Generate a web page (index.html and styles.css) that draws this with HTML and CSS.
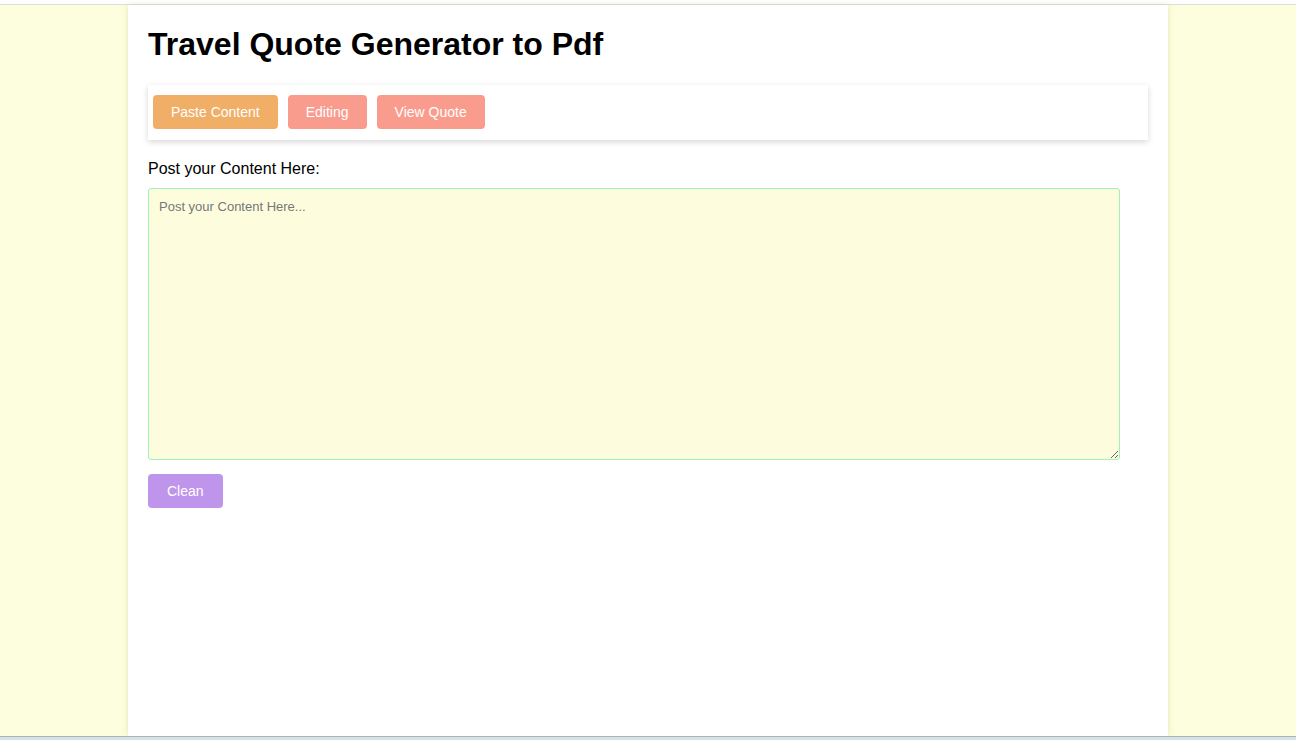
FILE: index.html
```html
<!DOCTYPE html>
<html lang="en">

<head>
  <meta charset="UTF-8" />
  <meta name="viewport" content="width=device-width, initial-scale=1.0" />
  <title>Travel Quote Generator to Pdf</title>
  <link rel="stylesheet" href="styles.css">
</head>

<body>
  <div class="top-strip"></div>

  <div class="page">
    <div class="container">
      <h1>Travel Quote Generator to Pdf</h1>

      <!-- Tabs -->
      <div class="tab-bar">
        <button class="tab tab-active" onclick="showTab('paste')">Paste Content</button>
        <button class="tab" onclick="showTab('edit')">Editing</button>
        <button class="tab" onclick="showTab('view')">View Quote</button>
      </div>

      <!-- Paste Section -->
      <div id="paste-section">
        <label class="field-label" for="content">Post your Content Here:</label>
        <textarea id="content" placeholder="Post your Content Here..."></textarea>
        <button class="clean-btn" onclick="cleanContent()">Clean</button>
      </div>
    </div>
  </div>

  <div class="bottom-strip"></div>

  <script>
    function showTab(name) {
      const tabs = document.querySelectorAll(".tab");
      const names = ["paste", "edit", "view"];
      tabs.forEach(function (tab, i) {
        tab.classList.toggle("tab-active", names[i] === name);
      });
    }

    function cleanContent() {
      document.getElementById("content").value = "";
    }
  </script>
</body>

</html>
```

FILE: styles.css
```css
html,
body {
  height: 100%;
}

body {
  font-family: Arial, "Liberation Sans", sans-serif;
  background-color: #fdfedd;
  margin: 0;
  display: flex;
  flex-direction: column;
}

.top-strip {
  height: 4px;
  background-color: #fff;
  border-bottom: 1px solid #dedede;
}

.page {
  flex: 1;
  display: flex;
  justify-content: center;
  min-height: 0;
}

.container {
  background-color: #fff;
  width: 1040px;
  padding: 0 20px;
  box-sizing: border-box;
  box-shadow: 0 0 6px rgba(180, 180, 120, 0.35);
}

.container h1 {
  font-size: 32px;
  margin: 21px 0 22px;
  color: #000;
}

.tab-bar {
  display: flex;
  gap: 10px;
  padding: 10px 5px 11px;
  box-shadow: 0 2px 6px rgba(0, 0, 0, 0.16);
}

.tab {
  height: 34px;
  padding: 0 18px;
  background-color: #f99c8e;
  color: white;
  border: none;
  border-radius: 4px;
  font-family: Arial, "Liberation Sans", sans-serif;
  font-size: 14px;
  cursor: pointer;
}

.tab-active {
  background-color: #f1ae66;
}

.field-label {
  display: block;
  margin-top: 20px;
  font-size: 16px;
  color: #000;
}

textarea {
  display: block;
  width: 972px;
  height: 272px;
  margin-top: 10px;
  padding: 10px;
  box-sizing: border-box;
  background-color: #fdfddd;
  border: 1px solid #9ef2bd;
  border-radius: 3px;
  font-family: Arial, "Liberation Sans", sans-serif;
  font-size: 13px;
}

textarea::placeholder {
  color: #777;
}

.clean-btn {
  display: block;
  height: 34px;
  margin-top: 14px;
  padding: 0 19px;
  background-color: #bf95ec;
  color: white;
  border: none;
  border-radius: 4px;
  font-family: Arial, "Liberation Sans", sans-serif;
  font-size: 14px;
  cursor: pointer;
}

.bottom-strip {
  height: 3px;
  background-color: #d3e3e6;
  border-top: 1px solid #a9b6b9;
}
```
